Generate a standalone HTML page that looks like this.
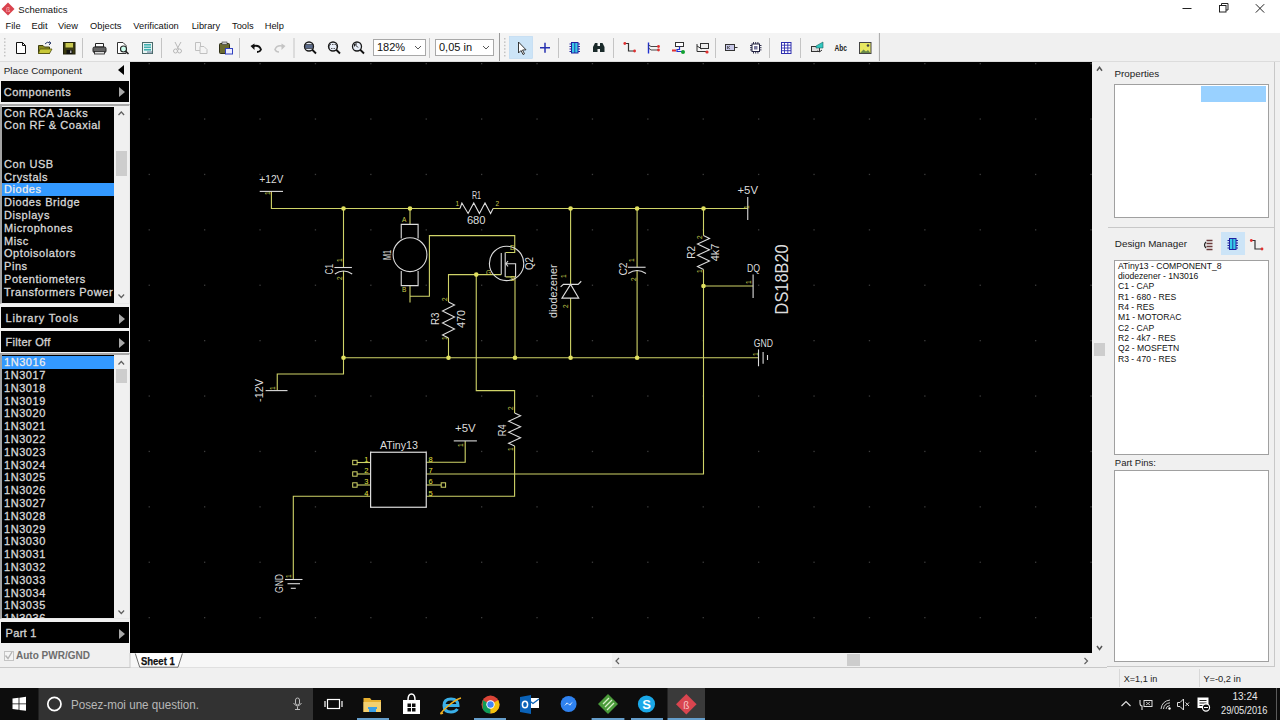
<!DOCTYPE html>
<html><head><meta charset="utf-8">
<style>
*{margin:0;padding:0;box-sizing:border-box}
html,body{width:1280px;height:720px;overflow:hidden;background:#f0f0f0;font-family:"Liberation Sans",sans-serif;position:relative}
.a{position:absolute}
.t{position:absolute;white-space:nowrap;line-height:1}
#title{left:0;top:0;width:1280px;height:17px;background:#fff}
#menu{left:0;top:17px;width:1280px;height:16px;background:#fff}
#tb{left:0;top:33px;width:1280px;height:29px;background:#f0f0f0;border-bottom:1px solid #dcdcdc}
.sep{position:absolute;top:38px;width:1px;height:20px;background:#c8c8c8}
.grip{position:absolute;top:37px;width:2px;height:21px;background-image:linear-gradient(#b0b0b0 50%,transparent 50%);background-size:2px 4px}
#left{left:0;top:62px;width:130px;height:606px;background:#f0f0f0;border-bottom:1px solid #c8c8c8}
.bar{position:absolute;left:1px;width:128px;background:#000;color:#d0d0d0;font-weight:normal;-webkit-text-stroke:0.35px #d0d0d0;font-size:11px}
.bar span{position:absolute;left:4.6px;top:5px;letter-spacing:0.3px}
.tri{position:absolute;width:0;height:0;border-top:5.5px solid transparent;border-bottom:5.5px solid transparent;border-left:6px solid #a8a8a8;left:118px;top:6.5px}
.list{position:absolute;left:2px;width:112px;background:#000;overflow:hidden}
.list div{height:12.8px;line-height:12.8px;color:#d8d8d8;font-weight:normal;-webkit-text-stroke:0.3px #d8d8d8;font-size:11px;padding-left:2px;white-space:nowrap;letter-spacing:0.55px}
.list div.sel{background:#3399ff;color:#fff}
.vs{position:absolute;left:114px;width:15px;background:#f0f0f0}
.thumb{position:absolute;background:#cdcdcd}
.chev{position:absolute;font-size:9px;color:#606060}
#canvas{left:130px;top:62px;width:962px;height:591px;background:#000;overflow:hidden}
#vscroll{left:1092px;top:62px;width:15px;height:591px;background:#f0f0f0}
#hbar{left:130px;top:653px;width:977px;height:15px;background:#f0f0f0;border-bottom:1px solid #c8c8c8}
#right{left:1107px;top:62px;width:168px;height:605px;background:#f0f0f0;border-right:1px solid #c8c8c8;border-bottom:1px solid #c8c8c8}
.box{position:absolute;background:#fff;border:1px solid #a0a0a0}
#status{left:0;top:668px;width:1280px;height:20px;background:#f0f0f0}
#taskbar{left:0;top:688px;width:1280px;height:32px;background:#0c0c0c}
.lbl{font-size:11px;color:#222}
.dm div{height:10.35px;line-height:10.35px;font-size:8.6px;color:#111;white-space:nowrap}
</style></head><body>
<!-- title bar -->
<div id="title" class="a">
  <svg class="a" style="left:1px;top:2px" width="14" height="14" viewBox="0 0 14 14"><path d="M7 0.5L13.5 7L7 13.5L0.5 7Z" fill="#d9434e"/><text x="5" y="10" font-size="7" fill="#fbb">ß</text></svg>
  <div class="t" style="left:18.3px;top:4.6px;font-size:9.5px;color:#111">Schematics</div>
  <svg class="a" style="left:1180px;top:0" width="100" height="16"><path d="M2.5 8.5H11.5" stroke="#222" stroke-width="1"/><rect x="39.5" y="5.5" width="6.5" height="6.5" fill="none" stroke="#222"/><path d="M41.5 5.5V3.5H48V10H46" fill="none" stroke="#222"/><path d="M75.8 4.2L84.2 12.6M84.2 4.2L75.8 12.6" stroke="#222" stroke-width="1"/></svg>
</div>
<div id="menu" class="a">
  <div class="t" style="left:5.6px;top:4.5px;font-size:9.3px;color:#111">File</div>
  <div class="t" style="left:31.5px;top:4.5px;font-size:9.3px;color:#111">Edit</div>
  <div class="t" style="left:58px;top:4.5px;font-size:9.3px;color:#111">View</div>
  <div class="t" style="left:90px;top:4.5px;font-size:9.3px;color:#111">Objects</div>
  <div class="t" style="left:133.3px;top:4.5px;font-size:9.3px;color:#111">Verification</div>
  <div class="t" style="left:191.7px;top:4.5px;font-size:9.3px;color:#111">Library</div>
  <div class="t" style="left:232px;top:4.5px;font-size:9.3px;color:#111">Tools</div>
  <div class="t" style="left:264.7px;top:4.5px;font-size:9.3px;color:#111">Help</div>
</div>
<div id="tb" class="a"></div>
<!-- TOOLBAR_ICONS --><svg class="a" style="left:0;top:33px" width="900" height="28" viewBox="0 33 900 28"><rect x="0" y="33" width="879" height="28" fill="#f4f4f4"/><rect x="82.0" y="38" width="1" height="20" fill="#c4c4c4"/><rect x="161.0" y="38" width="1" height="20" fill="#c4c4c4"/><rect x="239.0" y="38" width="1" height="20" fill="#c4c4c4"/><rect x="293.5" y="38" width="1" height="20" fill="#c4c4c4"/><rect x="429.0" y="38" width="1" height="20" fill="#c4c4c4"/><rect x="558.0" y="38" width="1" height="20" fill="#c4c4c4"/><rect x="613.0" y="38" width="1" height="20" fill="#c4c4c4"/><rect x="715.0" y="38" width="1" height="20" fill="#c4c4c4"/><rect x="769.0" y="38" width="1" height="20" fill="#c4c4c4"/><rect x="800.0" y="38" width="1" height="20" fill="#c4c4c4"/><rect x="499" y="33" width="1" height="28" fill="#9a9a9a"/><rect x="878.9" y="33" width="1" height="28" fill="#a8a8a8"/><rect x="4" y="38.0" width="1.5" height="1.5" fill="#c4c4c4"/><rect x="4" y="41.4" width="1.5" height="1.5" fill="#c4c4c4"/><rect x="4" y="44.8" width="1.5" height="1.5" fill="#c4c4c4"/><rect x="4" y="48.2" width="1.5" height="1.5" fill="#c4c4c4"/><rect x="4" y="51.6" width="1.5" height="1.5" fill="#c4c4c4"/><rect x="4" y="55.0" width="1.5" height="1.5" fill="#c4c4c4"/><rect x="504" y="38.0" width="1.5" height="1.5" fill="#c4c4c4"/><rect x="504" y="41.4" width="1.5" height="1.5" fill="#c4c4c4"/><rect x="504" y="44.8" width="1.5" height="1.5" fill="#c4c4c4"/><rect x="504" y="48.2" width="1.5" height="1.5" fill="#c4c4c4"/><rect x="504" y="51.6" width="1.5" height="1.5" fill="#c4c4c4"/><rect x="504" y="55.0" width="1.5" height="1.5" fill="#c4c4c4"/><path d="M16.5 42.5H22.5L25.5 45.5V53.5H16.5Z" fill="#fff" stroke="#111" stroke-width="1"/><path d="M22.5 42.5V45.5H25.5" fill="none" stroke="#111"/><path d="M38.5 45.5H43L44.5 47H49.5V53.5H38.5Z" fill="#8a8a20" stroke="#404010"/><path d="M40 49H52L49.5 53.5H38.5Z" fill="#c8c838" stroke="#505010" stroke-width="0.8"/><path d="M45 44Q47 41 50 43" fill="none" stroke="#2a3a6a" stroke-width="1"/><path d="M49 41.5L51 43L49 45" fill="none" stroke="#2a3a6a" stroke-width="1"/><rect x="63.5" y="42.5" width="11.5" height="11.5" fill="#3a3a10" stroke="#202008"/><rect x="65.5" y="43" width="7.5" height="4.5" fill="#c8c850"/><rect x="66.5" y="50" width="6" height="4" fill="#111"/><rect x="70" y="50.5" width="1.5" height="2.5" fill="#aaa"/><path d="M95.5 43.5H103.5V47H95.5Z" fill="#fff" stroke="#222"/><rect x="93" y="47" width="13" height="5.5" rx="1.5" fill="#666" stroke="#222"/><rect x="94.5" y="51.5" width="10" height="2.5" fill="#ddd" stroke="#222" stroke-width="0.8"/><path d="M117.5 42.5H123L126 45.5V53.5H117.5Z" fill="#fff" stroke="#333"/><circle cx="123.5" cy="49" r="3" fill="#cfe" stroke="#222" stroke-width="1.1"/><path d="M125.5 51L128.5 54" stroke="#222" stroke-width="1.6"/><rect x="142.5" y="42.5" width="10" height="11" fill="#e8f4f4" stroke="#4a6a6a"/><rect x="144" y="44" width="7" height="1.6" fill="#40b0b0"/><rect x="144" y="46.5" width="7" height="1.6" fill="#40b0b0"/><rect x="144" y="49" width="7" height="1.6" fill="#40b0b0"/><rect x="147" y="51.2" width="5" height="2" fill="#9ab"/><path d="M175 42L178.5 49M181 42L177 49" stroke="#b8b8b8" stroke-width="1"/><circle cx="175.5" cy="51" r="2" fill="none" stroke="#b8b8b8"/><circle cx="179.5" cy="51" r="2" fill="none" stroke="#b8b8b8"/><path d="M195.5 42.5H200.5V50.5H195.5Z" fill="#f4f4f4" stroke="#c0c0c0"/><path d="M200 46.5H204L207 49.5V53.5H200Z" fill="#f4f4f4" stroke="#c0c0c0"/><rect x="219.5" y="43.5" width="10" height="10" rx="1" fill="#6a6a30" stroke="#303018"/><rect x="222" y="42" width="5" height="2.5" fill="#ccc" stroke="#333" stroke-width="0.6"/><rect x="225.5" y="48.5" width="7" height="5.5" fill="#eef" stroke="#3040c0"/><path d="M252 46.5Q259 44 261 49.5Q260 52 257 52" fill="none" stroke="#111" stroke-width="1.8"/><path d="M250.5 46L254.5 43.5L254.5 50Z" fill="#111"/><path d="M284 46.5Q277 44 275 49.5Q276 52 279 52" fill="none" stroke="#c4c4c4" stroke-width="1.6"/><path d="M285.5 46L281.5 43.5L281.5 50Z" fill="#c4c4c4"/><circle cx="309" cy="46.5" r="4.5" fill="#e8eef8" stroke="#1a1a1a" stroke-width="1.3"/><path d="M312 49.5L316 53.5" stroke="#111" stroke-width="1.8"/><rect x="305" y="44.5" width="8" height="4" fill="#5a6a8a" stroke="#222" stroke-width="0.6"/><circle cx="333" cy="46.5" r="4.5" fill="#e8eef8" stroke="#1a1a1a" stroke-width="1.3"/><path d="M336 49.5L340 53.5" stroke="#111" stroke-width="1.8"/><rect x="329.5" y="44.5" width="7" height="4" fill="none" stroke="#333" stroke-width="0.8" stroke-dasharray="1.5 1"/><circle cx="357" cy="46.5" r="4.5" fill="#e8eef8" stroke="#1a1a1a" stroke-width="1.3"/><path d="M360 49.5L364 53.5" stroke="#111" stroke-width="1.8"/><path d="M354.5 44L358 47.5M354.5 44V46.5M354.5 44H357" stroke="#222" stroke-width="1"/><rect x="373.5" y="39.5" width="52.0" height="16" fill="#fff" stroke="#a8a8a8"/><text x="377.0" y="51" font-size="11" fill="#111" font-family="Liberation Sans">182%</text><path d="M415.0 46L418.0 49L421.0 46" fill="none" stroke="#444" stroke-width="0.9"/><rect x="435.5" y="39.5" width="58.0" height="16" fill="#fff" stroke="#a8a8a8"/><text x="439.0" y="51" font-size="11" fill="#111" font-family="Liberation Sans">0,05 in</text><path d="M483.0 46L486.0 49L489.0 46" fill="none" stroke="#444" stroke-width="0.9"/><rect x="509.3" y="36.5" width="23.2" height="22" fill="#cce4f7" stroke="#b8d8f2" stroke-width="0.6"/><path d="M518.5 42V53L521 50.5L523 54.5L524.5 53.8L522.5 50L526 49.8Z" fill="#fff" stroke="#222" stroke-width="0.9"/><path d="M540 47.75H550M545 42.75V52.75" stroke="#2630b0" stroke-width="1.5"/><rect x="571.5" y="42.5" width="6.5" height="10.5" fill="#38c8e8" stroke="#2020a0" stroke-width="1"/><path d="M574.75 42.5V53" stroke="#2020a0" stroke-width="0.8"/><path d="M569.5 44.0H571.5M578 44.0H580" stroke="#2020a0" stroke-width="1"/><path d="M569.5 46.5H571.5M578 46.5H580" stroke="#2020a0" stroke-width="1"/><path d="M569.5 49.0H571.5M578 49.0H580" stroke="#2020a0" stroke-width="1"/><path d="M569.5 51.5H571.5M578 51.5H580" stroke="#2020a0" stroke-width="1"/><path d="M593 52V47L595 43H597.5V52ZM604.5 52V47L602.5 43H600V52Z" fill="#1a2a2a"/><rect x="597" y="46" width="3.5" height="3" fill="#1a2a2a"/><path d="M625 43.5H628.5V51H634.5" fill="none" stroke="#333" stroke-width="1.2"/><circle cx="624.8" cy="43.5" r="1.4" fill="#e03030"/><circle cx="634.6" cy="51" r="1.4" fill="#e03030"/><path d="M648.5 42.5V53.5" stroke="#2030d0" stroke-width="1.4"/><path d="M648.5 45L651 46.5H658M648.5 48L651 50H658" fill="none" stroke="#333" stroke-width="0.9"/><circle cx="658.5" cy="46.5" r="1.4" fill="#e03030"/><circle cx="658.5" cy="50" r="1.4" fill="#e03030"/><rect x="675.5" y="42.5" width="8" height="4" fill="#fff" stroke="#333"/><path d="M679.5 46.5V49.5H677V51.5H682.5" fill="none" stroke="#2030d0" stroke-width="1.2"/><rect x="672" y="49.5" width="4" height="2" fill="#e03030"/><circle cx="683" cy="52" r="2" fill="#10a030"/><rect x="700.5" y="43.5" width="8" height="5" fill="#eee" stroke="#333"/><path d="M697 46L702 49M697 44V51.5H707" fill="none" stroke="#333" stroke-width="1"/><circle cx="707" cy="52" r="1.6" fill="#e03030"/><rect x="725.5" y="44.5" width="9" height="6" fill="#c8c8e8" stroke="#333"/><path d="M734.5 47.5H737.5" stroke="#333"/><path d="M727.5 46V49M730 46L728 47.5L730 49" fill="none" stroke="#333" stroke-width="0.7"/><rect x="752" y="44" width="7.5" height="7.5" fill="#fff" stroke="#202040"/><rect x="754" y="46" width="3.5" height="3.5" fill="#7a7aa0"/><path d="M750 45.5H752M759.5 45.5H761.5" stroke="#202040" stroke-width="0.9"/><path d="M753.5 42V44M753.5 51.5V53.5" stroke="#202040" stroke-width="0.9"/><path d="M750 47.7H752M759.5 47.7H761.5" stroke="#202040" stroke-width="0.9"/><path d="M755.7 42V44M755.7 51.5V53.5" stroke="#202040" stroke-width="0.9"/><path d="M750 49.9H752M759.5 49.9H761.5" stroke="#202040" stroke-width="0.9"/><path d="M757.9 42V44M757.9 51.5V53.5" stroke="#202040" stroke-width="0.9"/><rect x="781.5" y="42.5" width="9.5" height="11" fill="#fff" stroke="#3030b0"/><path d="M784.5 42.5V53.5" stroke="#3030b0" stroke-width="0.9"/><path d="M787.8 42.5V53.5" stroke="#3030b0" stroke-width="0.9"/><path d="M781.5 45.2H791" stroke="#3030b0" stroke-width="0.9"/><path d="M781.5 48H791" stroke="#3030b0" stroke-width="0.9"/><path d="M781.5 50.7H791" stroke="#3030b0" stroke-width="0.9"/><rect x="811.5" y="46.5" width="8" height="5" fill="#ddd" stroke="#333"/><path d="M816 46L823 42V48H816Z" fill="#30c8c0" stroke="#206060" stroke-width="0.6"/><path d="M817 51Q820 53 822 50" fill="none" stroke="#333"/><text x="834.5" y="51" font-size="9" font-weight="bold" fill="#222" font-family="Liberation Sans" textLength="12.5" lengthAdjust="spacingAndGlyphs">Abc</text><rect x="859.5" y="42.5" width="11.5" height="11" fill="#e8e860" stroke="#444"/><path d="M860 53L863.5 49.5L866 51.5L868 50L870.5 53Z" fill="#6a8a4a"/><circle cx="868" cy="45.5" r="1.3" fill="#444"/></svg><!-- /TOOLBAR_ICONS -->

<!-- left panel -->
<div id="left" class="a">
</div>
<div class="t" style="left:3.8px;top:65.7px;font-size:9.85px;color:#222">Place Component</div>
<div class="a" style="left:118px;top:65px;width:0;height:0;border-top:5.5px solid transparent;border-bottom:5.5px solid transparent;border-right:6px solid #000"></div>
<div class="bar" style="top:81px;height:21px"><span style="top:5.1px;left:2.8px;letter-spacing:0.5px">Components</span><div class="tri" style="top:6px"></div></div>
<div class="a" style="left:0;top:104px;width:130px;height:200px;border:1px solid #e8e8e8;border-left:2px solid #a4a4a4;border-top:2px solid #a8a8a8"></div><div class="a" style="left:0;top:353px;width:130px;height:266px;border:1px solid #e8e8e8;border-left:2px solid #a4a4a4;border-top:2px solid #a8a8a8"></div>
<div class="list" style="top:106.6px;height:196.5px">
  <div>Con RCA Jacks</div><div>Con RF &amp; Coaxial</div><div></div><div></div><div>Con USB</div><div>Crystals</div><div class="sel">Diodes</div><div>Diodes Bridge</div><div>Displays</div><div>Microphones</div><div>Misc</div><div>Optoisolators</div><div>Pins</div><div>Potentiometers</div><div>Transformers Power</div>
</div>
<div class="vs" style="top:106px;height:197px"><div class="thumb" style="left:2px;top:45px;width:11px;height:25px"></div></div>
<div class="bar" style="top:307px;height:21px"><span style="letter-spacing:0.85px">Library Tools</span><div class="tri"></div></div>
<div class="bar" style="top:331px;height:21px"><span>Filter Off</span><div class="tri"></div></div>
<div class="list" style="top:355.2px;height:263.3px">
  <div class="sel" style="margin-top:1px">1N3016</div><div>1N3017</div><div>1N3018</div><div>1N3019</div><div>1N3020</div><div>1N3021</div><div>1N3022</div><div>1N3023</div><div>1N3024</div><div>1N3025</div><div>1N3026</div><div>1N3027</div><div>1N3028</div><div>1N3029</div><div>1N3030</div><div>1N3031</div><div>1N3032</div><div>1N3033</div><div>1N3034</div><div>1N3035</div><div>1N3036</div>
</div>
<div class="vs" style="top:355px;height:263px"><div class="thumb" style="left:1.5px;top:14px;width:11.5px;height:14px"></div></div>
<div class="bar" style="top:622px;height:21px"><span>Part 1</span><div class="tri"></div></div>
<div class="a" style="left:3.5px;top:650.5px;width:10px;height:10px;border:1px solid #c4c4c4;background:#f4f4f4"></div>
<div class="t" style="left:16px;top:651px;font-size:10px;font-weight:bold;color:#6d6d6d">Auto PWR/GND</div>

<!-- canvas -->
<div id="canvas" class="a">
<!-- SCHEMATIC --><svg class="a" style="left:0;top:0" width="962" height="591" viewBox="130 62 962 591"><rect x="148.6" y="63.0" width="1.3" height="1.3" fill="#3c3c3c"/><rect x="148.6" y="118.4" width="1.3" height="1.3" fill="#3c3c3c"/><rect x="148.6" y="173.8" width="1.3" height="1.3" fill="#3c3c3c"/><rect x="148.6" y="229.2" width="1.3" height="1.3" fill="#3c3c3c"/><rect x="148.6" y="284.6" width="1.3" height="1.3" fill="#3c3c3c"/><rect x="148.6" y="340.0" width="1.3" height="1.3" fill="#3c3c3c"/><rect x="148.6" y="395.4" width="1.3" height="1.3" fill="#3c3c3c"/><rect x="148.6" y="450.8" width="1.3" height="1.3" fill="#3c3c3c"/><rect x="148.6" y="506.2" width="1.3" height="1.3" fill="#3c3c3c"/><rect x="148.6" y="561.6" width="1.3" height="1.3" fill="#3c3c3c"/><rect x="148.6" y="617.0" width="1.3" height="1.3" fill="#3c3c3c"/><rect x="204.0" y="63.0" width="1.3" height="1.3" fill="#3c3c3c"/><rect x="204.0" y="118.4" width="1.3" height="1.3" fill="#3c3c3c"/><rect x="204.0" y="173.8" width="1.3" height="1.3" fill="#3c3c3c"/><rect x="204.0" y="229.2" width="1.3" height="1.3" fill="#3c3c3c"/><rect x="204.0" y="284.6" width="1.3" height="1.3" fill="#3c3c3c"/><rect x="204.0" y="340.0" width="1.3" height="1.3" fill="#3c3c3c"/><rect x="204.0" y="395.4" width="1.3" height="1.3" fill="#3c3c3c"/><rect x="204.0" y="450.8" width="1.3" height="1.3" fill="#3c3c3c"/><rect x="204.0" y="506.2" width="1.3" height="1.3" fill="#3c3c3c"/><rect x="204.0" y="561.6" width="1.3" height="1.3" fill="#3c3c3c"/><rect x="204.0" y="617.0" width="1.3" height="1.3" fill="#3c3c3c"/><rect x="259.4" y="63.0" width="1.3" height="1.3" fill="#3c3c3c"/><rect x="259.4" y="118.4" width="1.3" height="1.3" fill="#3c3c3c"/><rect x="259.4" y="173.8" width="1.3" height="1.3" fill="#3c3c3c"/><rect x="259.4" y="229.2" width="1.3" height="1.3" fill="#3c3c3c"/><rect x="259.4" y="284.6" width="1.3" height="1.3" fill="#3c3c3c"/><rect x="259.4" y="340.0" width="1.3" height="1.3" fill="#3c3c3c"/><rect x="259.4" y="395.4" width="1.3" height="1.3" fill="#3c3c3c"/><rect x="259.4" y="450.8" width="1.3" height="1.3" fill="#3c3c3c"/><rect x="259.4" y="506.2" width="1.3" height="1.3" fill="#3c3c3c"/><rect x="259.4" y="561.6" width="1.3" height="1.3" fill="#3c3c3c"/><rect x="259.4" y="617.0" width="1.3" height="1.3" fill="#3c3c3c"/><rect x="314.8" y="63.0" width="1.3" height="1.3" fill="#3c3c3c"/><rect x="314.8" y="118.4" width="1.3" height="1.3" fill="#3c3c3c"/><rect x="314.8" y="173.8" width="1.3" height="1.3" fill="#3c3c3c"/><rect x="314.8" y="229.2" width="1.3" height="1.3" fill="#3c3c3c"/><rect x="314.8" y="284.6" width="1.3" height="1.3" fill="#3c3c3c"/><rect x="314.8" y="340.0" width="1.3" height="1.3" fill="#3c3c3c"/><rect x="314.8" y="395.4" width="1.3" height="1.3" fill="#3c3c3c"/><rect x="314.8" y="450.8" width="1.3" height="1.3" fill="#3c3c3c"/><rect x="314.8" y="506.2" width="1.3" height="1.3" fill="#3c3c3c"/><rect x="314.8" y="561.6" width="1.3" height="1.3" fill="#3c3c3c"/><rect x="314.8" y="617.0" width="1.3" height="1.3" fill="#3c3c3c"/><rect x="370.2" y="63.0" width="1.3" height="1.3" fill="#3c3c3c"/><rect x="370.2" y="118.4" width="1.3" height="1.3" fill="#3c3c3c"/><rect x="370.2" y="173.8" width="1.3" height="1.3" fill="#3c3c3c"/><rect x="370.2" y="229.2" width="1.3" height="1.3" fill="#3c3c3c"/><rect x="370.2" y="284.6" width="1.3" height="1.3" fill="#3c3c3c"/><rect x="370.2" y="340.0" width="1.3" height="1.3" fill="#3c3c3c"/><rect x="370.2" y="395.4" width="1.3" height="1.3" fill="#3c3c3c"/><rect x="370.2" y="450.8" width="1.3" height="1.3" fill="#3c3c3c"/><rect x="370.2" y="506.2" width="1.3" height="1.3" fill="#3c3c3c"/><rect x="370.2" y="561.6" width="1.3" height="1.3" fill="#3c3c3c"/><rect x="370.2" y="617.0" width="1.3" height="1.3" fill="#3c3c3c"/><rect x="425.6" y="63.0" width="1.3" height="1.3" fill="#3c3c3c"/><rect x="425.6" y="118.4" width="1.3" height="1.3" fill="#3c3c3c"/><rect x="425.6" y="173.8" width="1.3" height="1.3" fill="#3c3c3c"/><rect x="425.6" y="229.2" width="1.3" height="1.3" fill="#3c3c3c"/><rect x="425.6" y="284.6" width="1.3" height="1.3" fill="#3c3c3c"/><rect x="425.6" y="340.0" width="1.3" height="1.3" fill="#3c3c3c"/><rect x="425.6" y="395.4" width="1.3" height="1.3" fill="#3c3c3c"/><rect x="425.6" y="450.8" width="1.3" height="1.3" fill="#3c3c3c"/><rect x="425.6" y="506.2" width="1.3" height="1.3" fill="#3c3c3c"/><rect x="425.6" y="561.6" width="1.3" height="1.3" fill="#3c3c3c"/><rect x="425.6" y="617.0" width="1.3" height="1.3" fill="#3c3c3c"/><rect x="481.0" y="63.0" width="1.3" height="1.3" fill="#3c3c3c"/><rect x="481.0" y="118.4" width="1.3" height="1.3" fill="#3c3c3c"/><rect x="481.0" y="173.8" width="1.3" height="1.3" fill="#3c3c3c"/><rect x="481.0" y="229.2" width="1.3" height="1.3" fill="#3c3c3c"/><rect x="481.0" y="284.6" width="1.3" height="1.3" fill="#3c3c3c"/><rect x="481.0" y="340.0" width="1.3" height="1.3" fill="#3c3c3c"/><rect x="481.0" y="395.4" width="1.3" height="1.3" fill="#3c3c3c"/><rect x="481.0" y="450.8" width="1.3" height="1.3" fill="#3c3c3c"/><rect x="481.0" y="506.2" width="1.3" height="1.3" fill="#3c3c3c"/><rect x="481.0" y="561.6" width="1.3" height="1.3" fill="#3c3c3c"/><rect x="481.0" y="617.0" width="1.3" height="1.3" fill="#3c3c3c"/><rect x="536.4" y="63.0" width="1.3" height="1.3" fill="#3c3c3c"/><rect x="536.4" y="118.4" width="1.3" height="1.3" fill="#3c3c3c"/><rect x="536.4" y="173.8" width="1.3" height="1.3" fill="#3c3c3c"/><rect x="536.4" y="229.2" width="1.3" height="1.3" fill="#3c3c3c"/><rect x="536.4" y="284.6" width="1.3" height="1.3" fill="#3c3c3c"/><rect x="536.4" y="340.0" width="1.3" height="1.3" fill="#3c3c3c"/><rect x="536.4" y="395.4" width="1.3" height="1.3" fill="#3c3c3c"/><rect x="536.4" y="450.8" width="1.3" height="1.3" fill="#3c3c3c"/><rect x="536.4" y="506.2" width="1.3" height="1.3" fill="#3c3c3c"/><rect x="536.4" y="561.6" width="1.3" height="1.3" fill="#3c3c3c"/><rect x="536.4" y="617.0" width="1.3" height="1.3" fill="#3c3c3c"/><rect x="591.8" y="63.0" width="1.3" height="1.3" fill="#3c3c3c"/><rect x="591.8" y="118.4" width="1.3" height="1.3" fill="#3c3c3c"/><rect x="591.8" y="173.8" width="1.3" height="1.3" fill="#3c3c3c"/><rect x="591.8" y="229.2" width="1.3" height="1.3" fill="#3c3c3c"/><rect x="591.8" y="284.6" width="1.3" height="1.3" fill="#3c3c3c"/><rect x="591.8" y="340.0" width="1.3" height="1.3" fill="#3c3c3c"/><rect x="591.8" y="395.4" width="1.3" height="1.3" fill="#3c3c3c"/><rect x="591.8" y="450.8" width="1.3" height="1.3" fill="#3c3c3c"/><rect x="591.8" y="506.2" width="1.3" height="1.3" fill="#3c3c3c"/><rect x="591.8" y="561.6" width="1.3" height="1.3" fill="#3c3c3c"/><rect x="591.8" y="617.0" width="1.3" height="1.3" fill="#3c3c3c"/><rect x="647.2" y="63.0" width="1.3" height="1.3" fill="#3c3c3c"/><rect x="647.2" y="118.4" width="1.3" height="1.3" fill="#3c3c3c"/><rect x="647.2" y="173.8" width="1.3" height="1.3" fill="#3c3c3c"/><rect x="647.2" y="229.2" width="1.3" height="1.3" fill="#3c3c3c"/><rect x="647.2" y="284.6" width="1.3" height="1.3" fill="#3c3c3c"/><rect x="647.2" y="340.0" width="1.3" height="1.3" fill="#3c3c3c"/><rect x="647.2" y="395.4" width="1.3" height="1.3" fill="#3c3c3c"/><rect x="647.2" y="450.8" width="1.3" height="1.3" fill="#3c3c3c"/><rect x="647.2" y="506.2" width="1.3" height="1.3" fill="#3c3c3c"/><rect x="647.2" y="561.6" width="1.3" height="1.3" fill="#3c3c3c"/><rect x="647.2" y="617.0" width="1.3" height="1.3" fill="#3c3c3c"/><rect x="702.6" y="63.0" width="1.3" height="1.3" fill="#3c3c3c"/><rect x="702.6" y="118.4" width="1.3" height="1.3" fill="#3c3c3c"/><rect x="702.6" y="173.8" width="1.3" height="1.3" fill="#3c3c3c"/><rect x="702.6" y="229.2" width="1.3" height="1.3" fill="#3c3c3c"/><rect x="702.6" y="284.6" width="1.3" height="1.3" fill="#3c3c3c"/><rect x="702.6" y="340.0" width="1.3" height="1.3" fill="#3c3c3c"/><rect x="702.6" y="395.4" width="1.3" height="1.3" fill="#3c3c3c"/><rect x="702.6" y="450.8" width="1.3" height="1.3" fill="#3c3c3c"/><rect x="702.6" y="506.2" width="1.3" height="1.3" fill="#3c3c3c"/><rect x="702.6" y="561.6" width="1.3" height="1.3" fill="#3c3c3c"/><rect x="702.6" y="617.0" width="1.3" height="1.3" fill="#3c3c3c"/><rect x="758.0" y="63.0" width="1.3" height="1.3" fill="#3c3c3c"/><rect x="758.0" y="118.4" width="1.3" height="1.3" fill="#3c3c3c"/><rect x="758.0" y="173.8" width="1.3" height="1.3" fill="#3c3c3c"/><rect x="758.0" y="229.2" width="1.3" height="1.3" fill="#3c3c3c"/><rect x="758.0" y="284.6" width="1.3" height="1.3" fill="#3c3c3c"/><rect x="758.0" y="340.0" width="1.3" height="1.3" fill="#3c3c3c"/><rect x="758.0" y="395.4" width="1.3" height="1.3" fill="#3c3c3c"/><rect x="758.0" y="450.8" width="1.3" height="1.3" fill="#3c3c3c"/><rect x="758.0" y="506.2" width="1.3" height="1.3" fill="#3c3c3c"/><rect x="758.0" y="561.6" width="1.3" height="1.3" fill="#3c3c3c"/><rect x="758.0" y="617.0" width="1.3" height="1.3" fill="#3c3c3c"/><rect x="813.4" y="63.0" width="1.3" height="1.3" fill="#3c3c3c"/><rect x="813.4" y="118.4" width="1.3" height="1.3" fill="#3c3c3c"/><rect x="813.4" y="173.8" width="1.3" height="1.3" fill="#3c3c3c"/><rect x="813.4" y="229.2" width="1.3" height="1.3" fill="#3c3c3c"/><rect x="813.4" y="284.6" width="1.3" height="1.3" fill="#3c3c3c"/><rect x="813.4" y="340.0" width="1.3" height="1.3" fill="#3c3c3c"/><rect x="813.4" y="395.4" width="1.3" height="1.3" fill="#3c3c3c"/><rect x="813.4" y="450.8" width="1.3" height="1.3" fill="#3c3c3c"/><rect x="813.4" y="506.2" width="1.3" height="1.3" fill="#3c3c3c"/><rect x="813.4" y="561.6" width="1.3" height="1.3" fill="#3c3c3c"/><rect x="813.4" y="617.0" width="1.3" height="1.3" fill="#3c3c3c"/><rect x="868.8" y="63.0" width="1.3" height="1.3" fill="#3c3c3c"/><rect x="868.8" y="118.4" width="1.3" height="1.3" fill="#3c3c3c"/><rect x="868.8" y="173.8" width="1.3" height="1.3" fill="#3c3c3c"/><rect x="868.8" y="229.2" width="1.3" height="1.3" fill="#3c3c3c"/><rect x="868.8" y="284.6" width="1.3" height="1.3" fill="#3c3c3c"/><rect x="868.8" y="340.0" width="1.3" height="1.3" fill="#3c3c3c"/><rect x="868.8" y="395.4" width="1.3" height="1.3" fill="#3c3c3c"/><rect x="868.8" y="450.8" width="1.3" height="1.3" fill="#3c3c3c"/><rect x="868.8" y="506.2" width="1.3" height="1.3" fill="#3c3c3c"/><rect x="868.8" y="561.6" width="1.3" height="1.3" fill="#3c3c3c"/><rect x="868.8" y="617.0" width="1.3" height="1.3" fill="#3c3c3c"/><rect x="924.2" y="63.0" width="1.3" height="1.3" fill="#3c3c3c"/><rect x="924.2" y="118.4" width="1.3" height="1.3" fill="#3c3c3c"/><rect x="924.2" y="173.8" width="1.3" height="1.3" fill="#3c3c3c"/><rect x="924.2" y="229.2" width="1.3" height="1.3" fill="#3c3c3c"/><rect x="924.2" y="284.6" width="1.3" height="1.3" fill="#3c3c3c"/><rect x="924.2" y="340.0" width="1.3" height="1.3" fill="#3c3c3c"/><rect x="924.2" y="395.4" width="1.3" height="1.3" fill="#3c3c3c"/><rect x="924.2" y="450.8" width="1.3" height="1.3" fill="#3c3c3c"/><rect x="924.2" y="506.2" width="1.3" height="1.3" fill="#3c3c3c"/><rect x="924.2" y="561.6" width="1.3" height="1.3" fill="#3c3c3c"/><rect x="924.2" y="617.0" width="1.3" height="1.3" fill="#3c3c3c"/><rect x="979.6" y="63.0" width="1.3" height="1.3" fill="#3c3c3c"/><rect x="979.6" y="118.4" width="1.3" height="1.3" fill="#3c3c3c"/><rect x="979.6" y="173.8" width="1.3" height="1.3" fill="#3c3c3c"/><rect x="979.6" y="229.2" width="1.3" height="1.3" fill="#3c3c3c"/><rect x="979.6" y="284.6" width="1.3" height="1.3" fill="#3c3c3c"/><rect x="979.6" y="340.0" width="1.3" height="1.3" fill="#3c3c3c"/><rect x="979.6" y="395.4" width="1.3" height="1.3" fill="#3c3c3c"/><rect x="979.6" y="450.8" width="1.3" height="1.3" fill="#3c3c3c"/><rect x="979.6" y="506.2" width="1.3" height="1.3" fill="#3c3c3c"/><rect x="979.6" y="561.6" width="1.3" height="1.3" fill="#3c3c3c"/><rect x="979.6" y="617.0" width="1.3" height="1.3" fill="#3c3c3c"/><rect x="1035.0" y="63.0" width="1.3" height="1.3" fill="#3c3c3c"/><rect x="1035.0" y="118.4" width="1.3" height="1.3" fill="#3c3c3c"/><rect x="1035.0" y="173.8" width="1.3" height="1.3" fill="#3c3c3c"/><rect x="1035.0" y="229.2" width="1.3" height="1.3" fill="#3c3c3c"/><rect x="1035.0" y="284.6" width="1.3" height="1.3" fill="#3c3c3c"/><rect x="1035.0" y="340.0" width="1.3" height="1.3" fill="#3c3c3c"/><rect x="1035.0" y="395.4" width="1.3" height="1.3" fill="#3c3c3c"/><rect x="1035.0" y="450.8" width="1.3" height="1.3" fill="#3c3c3c"/><rect x="1035.0" y="506.2" width="1.3" height="1.3" fill="#3c3c3c"/><rect x="1035.0" y="561.6" width="1.3" height="1.3" fill="#3c3c3c"/><rect x="1035.0" y="617.0" width="1.3" height="1.3" fill="#3c3c3c"/><rect x="1090.4" y="63.0" width="1.3" height="1.3" fill="#3c3c3c"/><rect x="1090.4" y="118.4" width="1.3" height="1.3" fill="#3c3c3c"/><rect x="1090.4" y="173.8" width="1.3" height="1.3" fill="#3c3c3c"/><rect x="1090.4" y="229.2" width="1.3" height="1.3" fill="#3c3c3c"/><rect x="1090.4" y="284.6" width="1.3" height="1.3" fill="#3c3c3c"/><rect x="1090.4" y="340.0" width="1.3" height="1.3" fill="#3c3c3c"/><rect x="1090.4" y="395.4" width="1.3" height="1.3" fill="#3c3c3c"/><rect x="1090.4" y="450.8" width="1.3" height="1.3" fill="#3c3c3c"/><rect x="1090.4" y="506.2" width="1.3" height="1.3" fill="#3c3c3c"/><rect x="1090.4" y="561.6" width="1.3" height="1.3" fill="#3c3c3c"/><rect x="1090.4" y="617.0" width="1.3" height="1.3" fill="#3c3c3c"/><path d="M271.40 191.40 L271.40 208.50 L460.00 208.50" stroke="#d0d468" stroke-width="1.1" fill="none"/><path d="M493.00 208.50 L747.75 208.50" stroke="#d0d468" stroke-width="1.1" fill="none"/><path d="M343.50 208.50 L343.50 267.50" stroke="#d0d468" stroke-width="1.1" fill="none"/><path d="M343.50 271.00 L343.50 374.00 L277.25 374.00 L277.25 390.60" stroke="#d0d468" stroke-width="1.1" fill="none"/><path d="M343.50 357.75 L758.10 357.75" stroke="#d0d468" stroke-width="1.1" fill="none"/><path d="M410.00 208.50 L410.00 224.40" stroke="#d0d468" stroke-width="1.1" fill="none"/><path d="M410.00 285.60 L410.00 302.50" stroke="#d0d468" stroke-width="1.1" fill="none"/><path d="M410.00 296.25 L429.40 296.25 L429.40 235.60 L514.75 235.60 L514.75 252.50 L505.60 252.50" stroke="#d0d468" stroke-width="1.1" fill="none"/><path d="M505.60 276.90 L515.00 276.90 L515.00 357.75" stroke="#d0d468" stroke-width="1.1" fill="none"/><path d="M448.50 302.00 L448.50 274.60 L501.25 274.60" stroke="#d0d468" stroke-width="1.1" fill="none"/><path d="M448.50 338.00 L448.50 357.75" stroke="#d0d468" stroke-width="1.1" fill="none"/><path d="M476.25 274.60 L476.25 390.60 L514.60 390.60 L514.60 413.00" stroke="#d0d468" stroke-width="1.1" fill="none"/><path d="M514.60 446.00 L514.60 496.20 L426.25 496.20" stroke="#d0d468" stroke-width="1.1" fill="none"/><path d="M570.60 208.50 L570.60 284.40" stroke="#d0d468" stroke-width="1.1" fill="none"/><path d="M570.60 298.10 L570.60 357.75" stroke="#d0d468" stroke-width="1.1" fill="none"/><path d="M637.10 208.50 L637.10 267.25" stroke="#d0d468" stroke-width="1.1" fill="none"/><path d="M637.10 270.00 L637.10 357.75" stroke="#d0d468" stroke-width="1.1" fill="none"/><path d="M703.50 208.50 L703.50 235.60" stroke="#d0d468" stroke-width="1.1" fill="none"/><path d="M703.50 269.40 L703.50 474.00 L426.25 474.00" stroke="#d0d468" stroke-width="1.1" fill="none"/><path d="M703.50 286.00 L753.10 286.00" stroke="#d0d468" stroke-width="1.1" fill="none"/><path d="M426.25 462.30 L465.20 462.30 L465.20 440.90" stroke="#d0d468" stroke-width="1.1" fill="none"/><path d="M370.60 496.30 L293.30 496.30 L293.30 579.50" stroke="#d0d468" stroke-width="1.1" fill="none"/><path d="M370.60 462.50 L357.00 462.50" stroke="#d0d468" stroke-width="1.1" fill="none"/><rect x="352.7" y="460.3" width="4.4" height="4.4" fill="none" stroke="#d0d468" stroke-width="1"/><path d="M370.60 474.00 L357.00 474.00" stroke="#d0d468" stroke-width="1.1" fill="none"/><rect x="352.7" y="471.8" width="4.4" height="4.4" fill="none" stroke="#d0d468" stroke-width="1"/><path d="M370.60 485.00 L357.00 485.00" stroke="#d0d468" stroke-width="1.1" fill="none"/><rect x="352.7" y="482.8" width="4.4" height="4.4" fill="none" stroke="#d0d468" stroke-width="1"/><path d="M426.25 485.00 L441.00 485.00" stroke="#d0d468" stroke-width="1.1" fill="none"/><rect x="441.2" y="482.8" width="4.4" height="4.4" fill="none" stroke="#d0d468" stroke-width="1"/><circle cx="343.5" cy="208.5" r="2.3" fill="#e0e060"/><circle cx="410" cy="208.5" r="2.3" fill="#e0e060"/><circle cx="570.6" cy="208.5" r="2.3" fill="#e0e060"/><circle cx="637.1" cy="208.5" r="2.3" fill="#e0e060"/><circle cx="703.5" cy="208.5" r="2.3" fill="#e0e060"/><circle cx="476.25" cy="274.6" r="2.3" fill="#e0e060"/><circle cx="343.5" cy="357.75" r="2.3" fill="#e0e060"/><circle cx="448.5" cy="357.75" r="2.3" fill="#e0e060"/><circle cx="515" cy="357.75" r="2.3" fill="#e0e060"/><circle cx="570.6" cy="357.75" r="2.3" fill="#e0e060"/><circle cx="637.1" cy="357.75" r="2.3" fill="#e0e060"/><circle cx="703.5" cy="286" r="2.3" fill="#e0e060"/><path d="M259.70 191.40 L283.00 191.40" stroke="#dcdcdc" stroke-width="1.1" fill="none"/><path d="M747.75 196.90 L747.75 220.00" stroke="#dcdcdc" stroke-width="1.1" fill="none"/><path d="M753.10 274.40 L753.10 298.10" stroke="#dcdcdc" stroke-width="1.1" fill="none"/><path d="M758.50 349.40 L758.50 366.25" stroke="#dcdcdc" stroke-width="1.1" fill="none"/><path d="M763.10 351.90 L763.10 363.75" stroke="#dcdcdc" stroke-width="1.1" fill="none"/><path d="M767.50 355.00 L767.50 360.00" stroke="#dcdcdc" stroke-width="1.1" fill="none"/><path d="M265.60 390.60 L287.50 390.60" stroke="#dcdcdc" stroke-width="1.1" fill="none"/><path d="M285.00 579.50 L302.50 579.50" stroke="#dcdcdc" stroke-width="1.1" fill="none"/><path d="M287.50 583.70 L300.00 583.70" stroke="#dcdcdc" stroke-width="1.1" fill="none"/><path d="M290.80 588.30 L295.80 588.30" stroke="#dcdcdc" stroke-width="1.1" fill="none"/><path d="M453.75 440.90 L476.90 440.90" stroke="#dcdcdc" stroke-width="1.1" fill="none"/><path d="M460.00 208.50 L461.90 203.00 L468.10 213.50 L473.75 203.00 L479.40 213.50 L485.00 203.00 L490.60 213.50 L493.10 208.50" stroke="#dcdcdc" stroke-width="1.1" fill="none"/><path d="M448.50 302.00 L454.50 305.00 L442.50 311.00 L454.50 317.00 L442.50 323.00 L454.50 329.00 L442.50 335.00 L448.50 338.00" stroke="#dcdcdc" stroke-width="1.1" fill="none"/><path d="M514.60 413.00 L520.60 415.75 L508.60 421.25 L520.60 426.75 L508.60 432.25 L520.60 437.75 L508.60 443.25 L514.60 446.00" stroke="#dcdcdc" stroke-width="1.1" fill="none"/><path d="M703.50 235.60 L709.50 238.42 L697.50 244.05 L709.50 249.68 L697.50 255.32 L709.50 260.95 L697.50 266.58 L703.50 269.40" stroke="#dcdcdc" stroke-width="1.1" fill="none"/><path d="M401.25 238.50 L401.25 224.40 L418.10 224.40 L418.10 238.50" stroke="#dcdcdc" stroke-width="1.1" fill="none"/><path d="M401.25 271.00 L401.25 285.60 L418.10 285.60 L418.10 271.00" stroke="#dcdcdc" stroke-width="1.1" fill="none"/><circle cx="410" cy="254.7" r="16.9" fill="none" stroke="#dcdcdc" stroke-width="1.1"/><circle cx="506.6" cy="263.4" r="17.2" fill="none" stroke="#dcdcdc" stroke-width="1.1"/><path d="M505.20 252.50 L505.20 277.00" stroke="#dcdcdc" stroke-width="1.1" fill="none"/><path d="M501.25 253.00 L501.25 274.40" stroke="#dcdcdc" stroke-width="1.1" fill="none"/><path d="M505.60 263.75 L515.60 263.75 L515.60 276.90" stroke="#dcdcdc" stroke-width="1.1" fill="none"/><path d="M508.00 261.00 L506.00 263.75 L508.00 266.50" stroke="#dcdcdc" stroke-width="1.1" fill="none"/><path d="M334.40 267.50 L351.90 267.50" stroke="#dcdcdc" stroke-width="1.1" fill="none"/><path d="M334.8 274 Q343.5 268 352.2 274" stroke="#dcdcdc" stroke-width="1.1" fill="none"/><path d="M628.00 267.25 L645.60 267.25" stroke="#dcdcdc" stroke-width="1.1" fill="none"/><path d="M628.2 273.5 Q637.1 267.5 646 273.5" stroke="#dcdcdc" stroke-width="1.1" fill="none"/><path d="M560.60 286.90 L563.40 284.40 L578.10 284.40 L581.25 281.25" stroke="#dcdcdc" stroke-width="1.1" fill="none"/><path d="M570.60 284.40 L561.90 298.10 L578.75 298.10 L570.60 284.40" stroke="#dcdcdc" stroke-width="1.1" fill="none"/><rect x="370.6" y="452.25" width="55.65" height="55" fill="none" stroke="#dcdcdc" stroke-width="1.2"/><text x="283.5" y="182.6" font-size="10.3" fill="#dcdcdc" textLength="24.3" lengthAdjust="spacingAndGlyphs" text-anchor="end">+12V</text><text x="481" y="198.75" font-size="10.3" fill="#dcdcdc" textLength="9.1" lengthAdjust="spacingAndGlyphs" text-anchor="end">R1</text><text x="485.6" y="223.75" font-size="10.3" fill="#dcdcdc" textLength="18.7" lengthAdjust="spacingAndGlyphs" text-anchor="end">680</text><text transform="translate(390.6 260) rotate(-90)" font-size="10.3" fill="#dcdcdc" textLength="10" lengthAdjust="spacingAndGlyphs">M1</text><text transform="translate(533 270) rotate(-90)" font-size="10.3" fill="#dcdcdc" textLength="13" lengthAdjust="spacingAndGlyphs">Q2</text><text transform="translate(332.5 274.4) rotate(-90)" font-size="10.3" fill="#dcdcdc" textLength="10.6" lengthAdjust="spacingAndGlyphs">C1</text><text transform="translate(439.4 325) rotate(-90)" font-size="10.3" fill="#dcdcdc" textLength="12.5" lengthAdjust="spacingAndGlyphs">R3</text><text transform="translate(465 328) rotate(-90)" font-size="10.3" fill="#dcdcdc" textLength="18" lengthAdjust="spacingAndGlyphs">470</text><text transform="translate(263 401.9) rotate(-90)" font-size="10.3" fill="#dcdcdc" textLength="23" lengthAdjust="spacingAndGlyphs">-12V</text><text transform="translate(556.9 318.1) rotate(-90)" font-size="10.3" fill="#dcdcdc" textLength="53.7" lengthAdjust="spacingAndGlyphs">diodezener</text><text transform="translate(627 275.6) rotate(-90)" font-size="10.3" fill="#dcdcdc" textLength="13" lengthAdjust="spacingAndGlyphs">C2</text><text x="758" y="194.4" font-size="10.3" fill="#dcdcdc" textLength="20.5" lengthAdjust="spacingAndGlyphs" text-anchor="end">+5V</text><text transform="translate(695 258.75) rotate(-90)" font-size="10.3" fill="#dcdcdc" textLength="12.7" lengthAdjust="spacingAndGlyphs">R2</text><text transform="translate(719.4 261.25) rotate(-90)" font-size="10.3" fill="#dcdcdc" textLength="17.5" lengthAdjust="spacingAndGlyphs">4k7</text><text x="760" y="271.9" font-size="10.3" fill="#dcdcdc" textLength="13.1" lengthAdjust="spacingAndGlyphs" text-anchor="end">DQ</text><text transform="translate(788.1 314.4) rotate(-90)" font-size="17.8" fill="#dcdcdc" textLength="70" lengthAdjust="spacingAndGlyphs">DS18B20</text><text x="773.1" y="346.9" font-size="10.3" fill="#dcdcdc" textLength="19.3" lengthAdjust="spacingAndGlyphs" text-anchor="end">GND</text><text x="418" y="449.4" font-size="10.3" fill="#dcdcdc" textLength="38" lengthAdjust="spacingAndGlyphs" text-anchor="end">ATiny13</text><text x="475.6" y="431.9" font-size="10.3" fill="#dcdcdc" textLength="20.6" lengthAdjust="spacingAndGlyphs" text-anchor="end">+5V</text><text transform="translate(505.6 436.25) rotate(-90)" font-size="10.3" fill="#dcdcdc" textLength="11.8" lengthAdjust="spacingAndGlyphs">R4</text><text transform="translate(282.5 593) rotate(-90)" font-size="10.3" fill="#dcdcdc" textLength="19" lengthAdjust="spacingAndGlyphs">GND</text><text x="455.5" y="206" font-size="6.5" fill="#d0d050" text-anchor="start">1</text><text x="495.5" y="206" font-size="6.5" fill="#d0d050" text-anchor="start">2</text><text x="402" y="222" font-size="6.5" fill="#d0d050" text-anchor="start">A</text><text x="402" y="292" font-size="6.5" fill="#d0d050" text-anchor="start">B</text><text transform="translate(270 195) rotate(-90)" font-size="6.5" fill="#d0d050">1</text><text transform="translate(342 262) rotate(-90)" font-size="6.5" fill="#d0d050">1</text><text transform="translate(342 280) rotate(-90)" font-size="6.5" fill="#d0d050">2</text><text transform="translate(566 278) rotate(-90)" font-size="6.5" fill="#d0d050">1</text><text transform="translate(568 308) rotate(-90)" font-size="6.5" fill="#d0d050">2</text><text transform="translate(634 262) rotate(-90)" font-size="6.5" fill="#d0d050">1</text><text transform="translate(636 281) rotate(-90)" font-size="6.5" fill="#d0d050">2</text><text transform="translate(702 239) rotate(-90)" font-size="6.5" fill="#d0d050">2</text><text transform="translate(702 273) rotate(-90)" font-size="6.5" fill="#d0d050">1</text><text transform="translate(751 284) rotate(-90)" font-size="6.5" fill="#d0d050">1</text><text transform="translate(749 209) rotate(-90)" font-size="6.5" fill="#d0d050">1</text><text transform="translate(758 356) rotate(-90)" font-size="6.5" fill="#d0d050">1</text><text transform="translate(275 390) rotate(-90)" font-size="6.5" fill="#d0d050">1</text><text transform="translate(447 301) rotate(-90)" font-size="6.5" fill="#d0d050">2</text><text transform="translate(447 340) rotate(-90)" font-size="6.5" fill="#d0d050">1</text><text transform="translate(513 410) rotate(-90)" font-size="6.5" fill="#d0d050">2</text><text transform="translate(513 451) rotate(-90)" font-size="6.5" fill="#d0d050">1</text><text transform="translate(291 578) rotate(-90)" font-size="6.5" fill="#d0d050">1</text><text transform="translate(463 447) rotate(-90)" font-size="6.5" fill="#d0d050">1</text><text x="486" y="275" font-size="6.5" fill="#d0d050" text-anchor="start">G</text><text x="510" y="250" font-size="6.5" fill="#d0d050" text-anchor="start">D</text><text x="510" y="281" font-size="6.5" fill="#d0d050" text-anchor="start">S</text><text x="368.5" y="461.7" font-size="7.5" fill="#e4e440" text-anchor="end">1</text><text x="368.5" y="473.2" font-size="7.5" fill="#e4e440" text-anchor="end">2</text><text x="368.5" y="484.2" font-size="7.5" fill="#e4e440" text-anchor="end">3</text><text x="368.5" y="495.7" font-size="7.5" fill="#e4e440" text-anchor="end">4</text><text x="428.5" y="461.7" font-size="7.5" fill="#e4e440" text-anchor="start">8</text><text x="428.5" y="473.2" font-size="7.5" fill="#e4e440" text-anchor="start">7</text><text x="428.5" y="484.2" font-size="7.5" fill="#e4e440" text-anchor="start">6</text><text x="428.5" y="495.7" font-size="7.5" fill="#e4e440" text-anchor="start">5</text></svg><!-- /SCHEMATIC -->
</div>
<div id="vscroll" class="a"><div class="thumb" style="left:2px;top:281px;width:11px;height:13px"></div></div>
<div id="hbar" class="a"><div class="thumb" style="left:717px;top:1px;width:13px;height:12px"></div></div>

<!-- right panel -->
<div id="right" class="a"></div>
<div class="t lbl" style="left:1114.5px;top:69.3px;font-size:9.8px">Properties</div>
<div class="box" style="left:1114px;top:84px;width:155px;height:134px"><div class="a" style="left:86px;top:1px;width:65px;height:16px;background:#99d1ff"></div></div>
<div class="a" style="left:1108px;top:227px;width:167px;height:1px;background:#c8c8c8"></div>
<div class="t lbl" style="left:1114.8px;top:238.6px;font-size:9.85px">Design Manager</div>
<div class="a" style="left:1221px;top:232px;width:24px;height:23px;background:#cce4f7"></div>
<div class="box dm" style="left:1114px;top:259.5px;width:155px;height:195px;padding:0 0 0 3px">
<div>ATiny13 - COMPONENT_8</div><div>diodezener - 1N3016</div><div>C1 - CAP</div><div>R1 - 680 - RES</div><div>R4 - RES</div><div>M1 - MOTORAC</div><div>C2 - CAP</div><div>R2 - 4k7 - RES</div><div>Q2 - MOSFETN</div><div>R3 - 470 - RES</div>
</div>
<div class="t lbl" style="left:1114.8px;top:457.9px;font-size:9.5px">Part Pins:</div>
<div class="box" style="left:1114px;top:469.5px;width:155px;height:192px"></div>

<!-- status -->
<div id="status" class="a">
  <div class="a" style="left:1119px;top:1px;width:1px;height:18px;background:#d8d8d8"></div>
  <div class="a" style="left:1199px;top:1px;width:1px;height:18px;background:#d8d8d8"></div>
  <div class="t" style="left:1123.7px;top:6.8px;font-size:9.1px;color:#222">X=1,1 in</div>
  <div class="t" style="left:1203.4px;top:6.8px;font-size:9.3px;color:#222">Y=-0,2 in</div>
</div>
<!-- taskbar -->
<div id="taskbar" class="a">
<!-- TASKBAR --><svg class="a" style="left:0;top:0" width="1280" height="32" viewBox="0 0 1280 32"><rect x="0" y="0" width="1280" height="32" fill="#0d0d0d"/><rect x="38.5" y="0" width="274.5" height="32" fill="#323232"/><path d="M12.5 10.6L18.6 9.8V15.4H12.5ZM19.4 9.7L26 8.8V15.4H19.4ZM12.5 16.2H18.6V21.8L12.5 21ZM19.4 16.2H26V22.8L19.4 21.9Z" fill="#fff"/><circle cx="54.4" cy="16" r="6.6" fill="none" stroke="#fff" stroke-width="1.7"/><text x="71" y="21" font-size="12" fill="#b8b8b8" font-family="Liberation Sans" textLength="128" lengthAdjust="spacingAndGlyphs">Posez-moi une question.</text><rect x="295.5" y="10" width="4" height="7" rx="2" fill="none" stroke="#bbb" stroke-width="1"/><path d="M293.5 15Q297.5 21 301.5 15M297.5 18.5V21.5M295 21.5H300" fill="none" stroke="#bbb" stroke-width="1"/><rect x="327.5" y="11.5" width="12" height="9" fill="none" stroke="#fff" stroke-width="1.2"/><path d="M325 13V19M342 13V19" stroke="#fff" stroke-width="1.2"/><rect x="357" y="30" width="32" height="2" fill="#76b9ed" opacity="0.85"/><rect x="474" y="30" width="32" height="2" fill="#76b9ed" opacity="0.85"/><rect x="591.6" y="30" width="32.799999999999955" height="2" fill="#76b9ed" opacity="0.85"/><rect x="631" y="30" width="32" height="2" fill="#76b9ed" opacity="0.85"/><rect x="667.5" y="30" width="37.5" height="2" fill="#76b9ed" opacity="0.85"/><rect x="667.5" y="0" width="37.5" height="30" fill="#3a3a3a"/><path d="M363.5 10H370L371.5 12H381V24H363.5Z" fill="#e8b030"/><rect x="363.5" y="14" width="17.5" height="10" fill="#f4d070"/><path d="M369 24V20H376V24" fill="#3ba0e8"/><rect x="368" y="19" width="9" height="2" fill="#3ba0e8"/><path d="M403 12H420V26H403Z" fill="#fff"/><path d="M408 12Q408 6 411.5 6Q415 6 415 12" fill="none" stroke="#fff" stroke-width="1.5"/><rect x="407.5" y="15.5" width="3.5" height="3.5" fill="#0d0d0d"/><rect x="412" y="15.5" width="3.5" height="3.5" fill="#0d0d0d"/><rect x="407.5" y="20" width="3.5" height="3.5" fill="#0d0d0d"/><rect x="412" y="20" width="3.5" height="3.5" fill="#0d0d0d"/><path d="M444 17.5H458Q458 11 451 11Q444 11 444 17.5Q444 24 451 24Q455.5 24 457.5 21" fill="none" stroke="#3ab0e8" stroke-width="3"/><path d="M443 25Q437 28 447 19Q456 11 461 10" fill="none" stroke="#f0b020" stroke-width="1.4"/><circle cx="490.5" cy="16.5" r="9" fill="#db4437"/><path d="M490.5 16.5L482.7 12V21Q485 25.5 490.5 25.5Z" fill="#0f9d58"/><path d="M490.5 16.5L498.3 12L499.5 16.5Q499.5 22 494 25L490.5 25.5Z" fill="#f4c20d"/><circle cx="490.5" cy="16.5" r="4.2" fill="#fff"/><circle cx="490.5" cy="16.5" r="3.2" fill="#4285f4"/><rect x="527" y="10" width="12" height="10" fill="#fff"/><path d="M527 11L533 15.5L539 11" fill="none" stroke="#0a62b8" stroke-width="1.3"/><path d="M520 9L531 7V26L520 24Z" fill="#0a62b8"/><ellipse cx="525" cy="16.5" rx="2.6" ry="3.3" fill="none" stroke="#fff" stroke-width="1.5"/><circle cx="568.6" cy="16" r="8" fill="#2f82f0"/><path d="M564 18L567 14.5L569.5 16.5L573 13.5L570 17.5L567.5 15.5Z" fill="#fff"/><path d="M608 6L618 16L608 26L598 16Z" fill="#4a9a3a"/><path d="M603 16L609 10M605 19L612 12M607 22L614 15" stroke="#d8f0c8" stroke-width="1.3"/><circle cx="646.5" cy="16" r="8.6" fill="#1aa8e8"/><text x="646.5" y="21" font-size="13" font-weight="bold" fill="#fff" text-anchor="middle" font-family="Liberation Sans">S</text><path d="M686.3 6L696.6 16.3L686.3 26.6L676 16.3Z" fill="#d9454f"/><text x="686.3" y="20.5" font-size="10" fill="#f8c8c8" text-anchor="middle" font-family="Liberation Sans">ß</text><path d="M1121.5 18L1126 13.5L1130.5 18" fill="none" stroke="#ddd" stroke-width="1.2"/><path d="M1140 12V15Q1140 18 1142 18V22" fill="none" stroke="#ddd" stroke-width="1.1"/><rect x="1144" y="12.5" width="8" height="6" fill="none" stroke="#ddd" stroke-width="1"/><path d="M1146 14L1150 17M1150 14L1146 17" stroke="#ddd" stroke-width="0.8"/><path d="M1161 21Q1162 13 1170 12M1163.5 21Q1164 15.5 1170 14.8M1166 21Q1166 18 1170 17.5" fill="none" stroke="#ccc" stroke-width="1"/><circle cx="1169.5" cy="20.5" r="1.2" fill="#fff"/><path d="M1177.5 14.5H1180L1183.5 11V22L1180 18.5H1177.5Z" fill="none" stroke="#ddd" stroke-width="1"/><path d="M1185.5 14.5L1189 18M1189 14.5L1185.5 18" stroke="#ddd" stroke-width="1"/><rect x="1197.5" y="9.5" width="11" height="10.5" fill="#fff"/><path d="M1199.5 12.5H1206.5M1199.5 15H1206.5M1199.5 17.5H1203" stroke="#0d0d0d" stroke-width="0.9"/><circle cx="1206" cy="19.5" r="3.6" fill="#0d0d0d" stroke="#fff" stroke-width="1.1"/><path d="M1204 19.5H1208" stroke="#fff" stroke-width="1"/><text x="1245" y="11.5" font-size="10" fill="#e8e8e8" text-anchor="middle" font-family="Liberation Sans">13:24</text><text x="1244.2" y="25.5" font-size="10" fill="#e8e8e8" text-anchor="middle" font-family="Liberation Sans" textLength="46.4" lengthAdjust="spacingAndGlyphs">29/05/2016</text><rect x="1276" y="0" width="1" height="32" fill="#5a5a5a"/></svg><!-- /TASKBAR -->
</div>

<!-- EXTRA -->
<svg class="a" style="left:0;top:0" width="1280" height="688" viewBox="0 0 1280 688">
<!-- list scroll arrows -->
<path d="M118.5 115L121.3 112L124.1 115" fill="none" stroke="#606060" stroke-width="1.2"/>
<path d="M118.5 294.5L121.3 297.5L124.1 294.5" fill="none" stroke="#606060" stroke-width="1.2"/>
<path d="M118.5 364.5L121.3 361.5L124.1 364.5" fill="none" stroke="#606060" stroke-width="1.2"/>
<path d="M118.5 610.5L121.3 613.5L124.1 610.5" fill="none" stroke="#606060" stroke-width="1.2"/>
<!-- canvas scroll arrows -->
<path d="M1097 70.8L1099.5 67.3L1102 70.8" fill="none" stroke="#555" stroke-width="1.5"/>
<path d="M1097 646L1099.5 649.5L1102 646" fill="none" stroke="#555" stroke-width="1.5"/>
<path d="M619 658L616 661L619 664" fill="none" stroke="#606060" stroke-width="1.2"/>
<path d="M1084.5 658L1087.5 661L1084.5 664" fill="none" stroke="#606060" stroke-width="1.2"/>
<!-- sheet tab -->
<rect x="130" y="653" width="482" height="14.5" fill="#f7f7f7"/><rect x="129.5" y="653" width="1" height="15" fill="#c8c8c8"/><path d="M135.3 653.5L139.7 667.2H178L182.4 653.5" fill="#fff" stroke="#707070" stroke-width="1"/>
<text x="141" y="665" font-size="10.2" font-weight="bold" fill="#111" stroke="#111" stroke-width="0.25" font-family="Liberation Sans" textLength="33.7" lengthAdjust="spacingAndGlyphs">Sheet 1</text><path d="M5.5 655.5L8 658.5L12 652" fill="none" stroke="#b4b4b4" stroke-width="1.4"/>
<!-- design manager icons -->
<path d="M1206.5 240.5H1212.5M1206.5 243.5H1212.5M1206.5 246.5H1212.5M1206.5 249.5H1212.5" stroke="#6a3a3a" stroke-width="1.4"/>
<path d="M1206 242Q1203 245 1206 248" fill="none" stroke="#222" stroke-width="1.2"/>
<rect x="1229.5" y="238.5" width="6.5" height="11" fill="#38c8e8" stroke="#2020a0" stroke-width="1"/>
<path d="M1232.75 238.5V249.5" stroke="#2020a0" stroke-width="0.8"/>
<path d="M1227.5 240.5H1229.5M1236 240.5H1238M1227.5 243H1229.5M1236 243H1238M1227.5 245.5H1229.5M1236 245.5H1238M1227.5 248H1229.5M1236 248H1238" stroke="#2020a0" stroke-width="1"/>
<path d="M1251.5 240.5H1255V249H1262" fill="none" stroke="#333" stroke-width="1.2"/>
<circle cx="1251.3" cy="240.5" r="1.4" fill="#e03030"/><circle cx="1262" cy="249" r="1.4" fill="#e03030"/>
</svg>
<!-- /EXTRA -->
</body></html>
